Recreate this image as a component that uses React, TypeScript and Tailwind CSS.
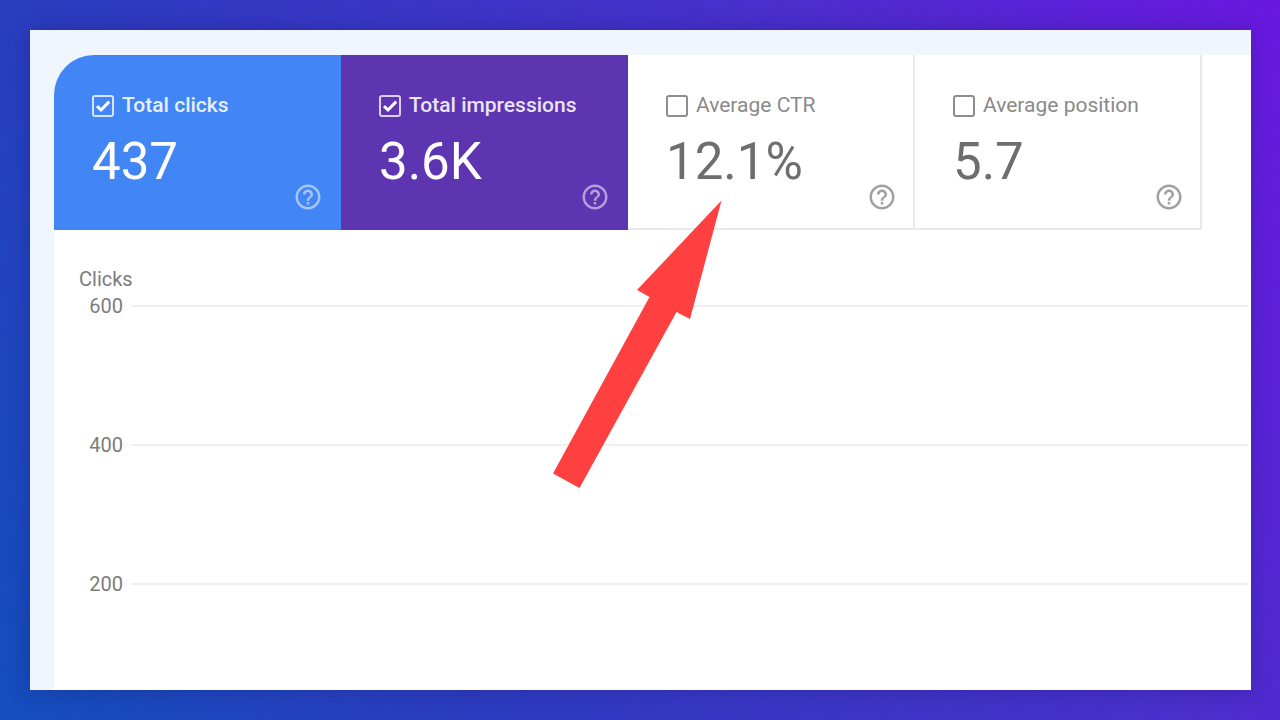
import { useState } from 'react';
import { MdHelpOutline } from 'react-icons/md';

interface Metric {
  id: string;
  label: string;
  value: string;
  active: boolean;
  cardClass: string;
  labelClass: string;
  boxClass: string;
  helpClass: string;
}

const inactiveCard = 'bg-white shadow-[inset_-2px_-2px_0_#e9e9e9] text-[#6e6e6e]';

const metrics: Metric[] = [
  {
    id: 'clicks',
    label: 'Total clicks',
    value: '437',
    active: true,
    cardClass: 'bg-[#4285f4] text-white rounded-tl-[40px]',
    labelClass: 'font-medium text-[#e6effd]',
    boxClass: 'border-[#d5e4fd]',
    helpClass: 'text-[#a6c5fa]',
  },
  {
    id: 'impressions',
    label: 'Total impressions',
    value: '3.6K',
    active: true,
    cardClass: 'bg-[#5e35b1] text-white',
    labelClass: 'font-medium text-[#ebe3f6]',
    boxClass: 'border-[#dccff0]',
    helpClass: 'text-[#b59fdb]',
  },
  {
    id: 'ctr',
    label: 'Average CTR',
    value: '12.1%',
    active: false,
    cardClass: inactiveCard,
    labelClass: 'text-[#8a8a8a]',
    boxClass: 'border-[#8e8e8e]',
    helpClass: 'text-[#a0a0a0]',
  },
  {
    id: 'position',
    label: 'Average position',
    value: '5.7',
    active: false,
    cardClass: inactiveCard,
    labelClass: 'text-[#8a8a8a]',
    boxClass: 'border-[#8e8e8e]',
    helpClass: 'text-[#a0a0a0]',
  },
];

const ticks = [600, 400, 200];

const MetricCard = ({ metric }: { metric: Metric }) => {
  const [checked, setChecked] = useState(metric.active);

  return (
    <div className={`relative h-[175px] pt-[38px] pl-[38px] ${metric.cardClass}`}>
      <div className="flex items-end gap-2">
        <span className="grid shrink-0">
          <input
            id={metric.id}
            type="checkbox"
            checked={checked}
            onChange={() => setChecked(!checked)}
            className={`col-start-1 row-start-1 size-[22px] appearance-none rounded-[3px] border-2 ${metric.boxClass}`}
          />
          {checked && (
            <svg
              viewBox="0 0 22 22"
              className="pointer-events-none col-start-1 row-start-1 size-[22px]"
              fill="none"
              stroke="currentColor"
              strokeWidth="3"
            >
              <path d="M5 11.2 9 15 17.2 6.6" />
            </svg>
          )}
        </span>
        <label htmlFor={metric.id} className={`text-[21px] leading-6 whitespace-nowrap ${metric.labelClass}`}>
          {metric.label}
        </label>
      </div>
      <div className="mt-4 text-[51px] leading-[58px]">{metric.value}</div>
      <button
        type="button"
        aria-label={`About ${metric.label}`}
        className={`absolute right-[18px] bottom-[18px] ${metric.helpClass}`}
      >
        <MdHelpOutline size={30} />
      </button>
    </div>
  );
};

const ClicksChart = () => (
  <div className="pt-[38px] pr-[3px] pl-[25px] text-[20px] leading-[22px] text-[#7c7c7c]">
    <div>Clicks</div>
    <div className="mt-[5px] flex flex-col gap-[117px]">
      {ticks.map((tick) => (
        <div key={tick} className="flex items-center gap-2">
          <span className="w-11 text-right">{tick}</span>
          <span className="h-[2px] flex-1 bg-[#f0f0f0]" />
        </div>
      ))}
    </div>
  </div>
);

const Arrow = () => (
  <svg
    viewBox="0 0 170 290"
    className="pointer-events-none absolute top-[169px] left-[522px] h-[290px] w-[170px]"
    fill="#ff4040"
  >
    <path d="M169.5 1.5 138 120 124.5 113 27.5 289 1 274.5 97.5 98 85 91Z" />
  </svg>
);

export default function App() {
  return (
    <div className="flex min-h-screen bg-[linear-gradient(60deg,#144ebc_0%,#2c3cc0_28%,#4a2fcc_70%,#6a18e0_100%)] py-[30px] pr-[29px] pl-[30px] font-['Roboto',sans-serif]">
      <main className="relative flex flex-1 bg-[#f1f5fd] pt-[25px] pl-6 shadow-[0_0_20px_rgba(20,20,90,0.3)]">
        <section className="flex-1 rounded-tl-[40px] bg-white">
          <div className="grid grid-cols-4 pr-[49px]">
            {metrics.map((metric) => (
              <MetricCard key={metric.id} metric={metric} />
            ))}
          </div>
          <ClicksChart />
        </section>
        <Arrow />
      </main>
    </div>
  );
}
